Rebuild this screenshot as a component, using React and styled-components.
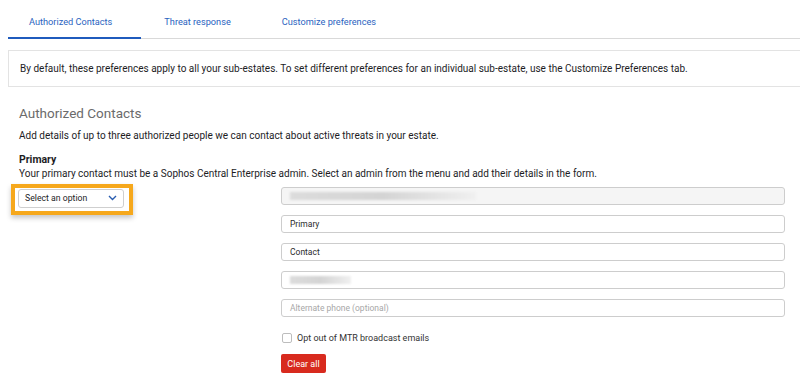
import React from "react";
import styled, { createGlobalStyle } from "styled-components";

const Global = createGlobalStyle`
  html, body { margin: 0; padding: 0; background: #fff; }
  body { font-family: Roboto, "Liberation Sans", sans-serif; color: #1d1d1f; overflow: hidden; width: 800px; height: 380px; }
  * { box-sizing: border-box; }
`;

const Page = styled.div`
  padding-left: 8px;
  width: 800px;
`;

const TabBar = styled.div`
  display: flex;
  height: 39px;
  border-bottom: 1px solid #d9d9d9;
  margin-right: -8px;
`;

const Tab = styled.div`
  display: flex;
  align-items: center;
  padding: 5px ${(p) => p.$pr}px 0 ${(p) => p.$pl}px;
  font-size: 9.2px;
  color: #2a63c0;
  margin-bottom: -1px;
  border-bottom: 2px solid ${(p) => (p.$active ? "#1f5bbd" : "transparent")};
`;

const InfoBox = styled.div`
  margin-top: 11px;
  height: 37px;
  border: 1px solid #e3e3e3;
  border-right: none;
  display: flex;
  align-items: center;
  padding-left: 11px;
  font-size: 10px;
  color: #1d1d1f;
  margin-right: -8px;
`;

const Content = styled.div`
  padding: 0 7px 0 11px;
`;

const Heading = styled.h2`
  margin: 18px 0 0;
  font-weight: 400;
  font-size: 13.5px;
  line-height: 17px;
  color: #6b6b6b;
`;

const Para = styled.p`
  margin: ${(p) => p.$mt || 0}px 0 0;
  font-size: 10px;
  line-height: 14px;
  color: #1d1d1f;
`;

const SubHead = styled.h3`
  margin: 10px 0 0;
  font-size: 10.5px;
  line-height: 14px;
  font-weight: 700;
  color: #1d1d1f;
`;

const FormRow = styled.div`
  display: grid;
  grid-template-columns: 262px 504px;
  align-items: start;
  margin-top: 5px;
`;

const Highlight = styled.div`
  display: inline-block;
  margin: -5px 0 0 -8px;
  padding: 1px 5px 3px 3px;
  border: 4px solid #f6a81c;
  background: #fff;
  box-shadow: 0 3px 5px rgba(0, 0, 0, 0.22);
`;

const SelectBox = styled.div`
  width: 106px;
  height: 19px;
  border: 1px solid #cfcfcf;
  border-radius: 3px;
  display: flex;
  align-items: center;
  justify-content: space-between;
  padding: 0 6px 0 6px;
  font-size: 8.7px;
  color: #1d1d1f;
`;

const Fields = styled.div`
  display: flex;
  flex-direction: column;
  gap: 10px;
  padding-top: 1px;
`;

const Field = styled.div`
  height: 18px;
  border: 1px solid #cdcdcd;
  border-radius: 3px;
  background: ${(p) => (p.$disabled ? "#f5f5f5" : "#fff")};
  display: flex;
  align-items: center;
  padding-left: 8px;
  font-size: 8.5px;
  color: ${(p) => (p.$placeholder ? "#a8a8a8" : "#2b2b2b")};
`;

const Blur = styled.span`
  display: block;
  height: 8px;
  width: ${(p) => p.$w}px;
  background: linear-gradient(90deg, #dcdcdc 0%, #d4d4d4 50%, #f0f0f0 100%);
  filter: blur(0.8px);
`;

const CheckRow = styled.label`
  display: flex;
  align-items: center;
  gap: 5px;
  margin-top: 6px;
  font-size: 9px;
  color: #333;
`;

const Check = styled.span`
  width: 10px;
  height: 10px;
  border: 1px solid #bdbdbd;
  border-radius: 2px;
  margin-left: 1px;
  background: #fff;
`;

const ClearButton = styled.button`
  align-self: flex-start;
  width: 45px;
  height: 19px;
  margin-top: 1px;
  border: none;
  border-radius: 2px;
  background: #d82a1e;
  color: #fff;
  font-family: inherit;
  font-size: 9px;
  padding: 0;
`;

export default function App() {
  return (
    <>
      <Global />
      <Page>
        <TabBar>
          <Tab $active $pl={21} $pr={29}>Authorized Contacts</Tab>
          <Tab $pl={23} $pr={27}>Threat response</Tab>
          <Tab $pl={24} $pr={24}>Customize preferences</Tab>
        </TabBar>
        <InfoBox>
          By default, these preferences apply to all your sub-estates. To set different preferences for an individual sub-estate, use the Customize Preferences tab.
        </InfoBox>
        <Content>
          <Heading>Authorized Contacts</Heading>
          <Para $mt={7}>Add details of up to three authorized people we can contact about active threats in your estate.</Para>
          <SubHead>Primary</SubHead>
          <Para>Your primary contact must be a Sophos Central Enterprise admin. Select an admin from the menu and add their details in the form.</Para>
          <FormRow>
            <div>
              <Highlight>
                <SelectBox>
                  <span>Select an option</span>
                  <svg width="9" height="6" viewBox="0 0 9 6">
                    <path d="M1 1l3.5 3.5L8 1" fill="none" stroke="#2a5db0" strokeWidth="1.4" />
                  </svg>
                </SelectBox>
              </Highlight>
            </div>
            <Fields>
              <Field $disabled><Blur $w={186} /></Field>
              <Field>Primary</Field>
              <Field>Contact</Field>
              <Field><Blur $w={61} /></Field>
              <Field $placeholder>Alternate phone (optional)</Field>
              <CheckRow><Check />Opt out of MTR broadcast emails</CheckRow>
              <ClearButton>Clear all</ClearButton>
            </Fields>
          </FormRow>
        </Content>
      </Page>
    </>
  );
}
